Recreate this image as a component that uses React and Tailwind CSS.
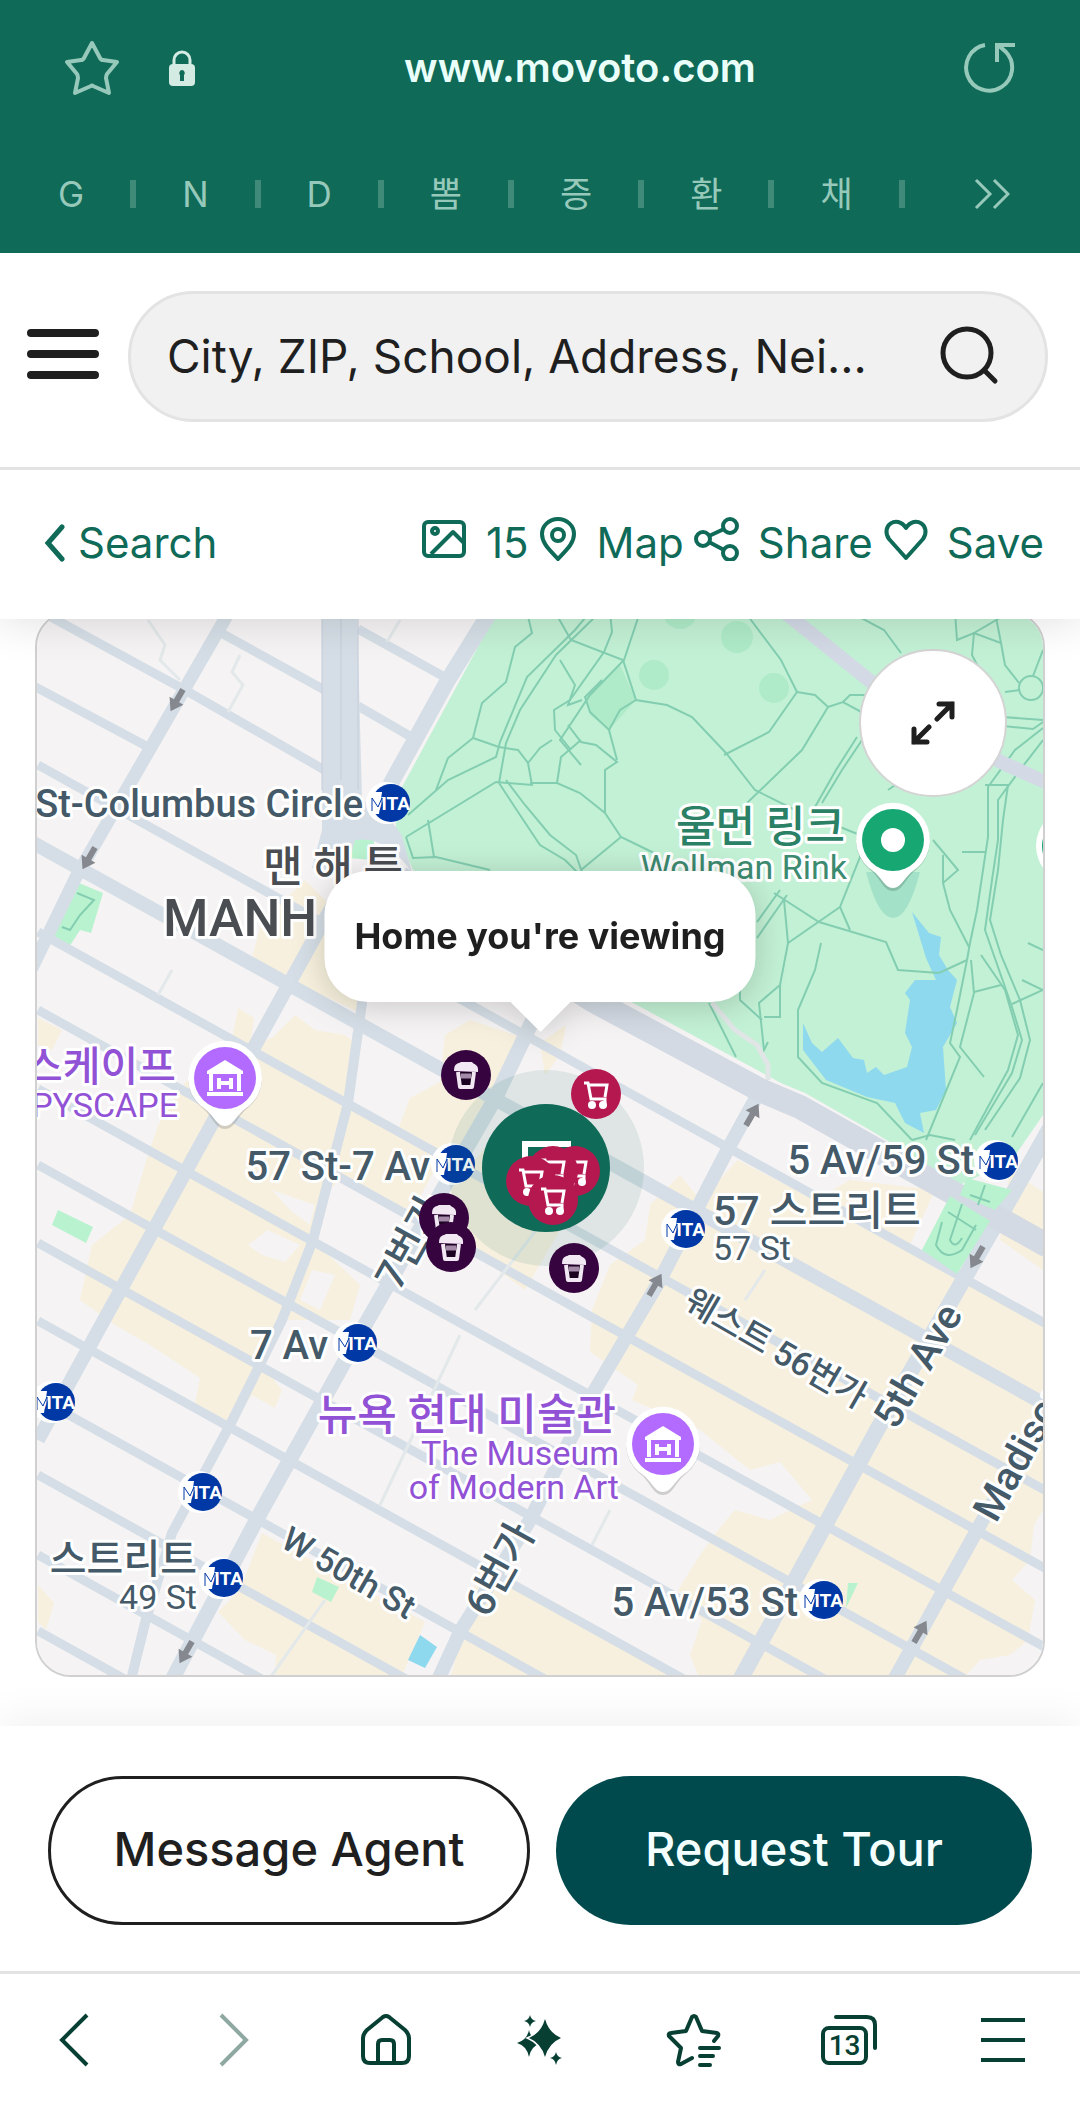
import React from 'react';

const bookmarks = ['G', 'N', 'D', '뽐', '증', '환', '채'];

// y of every cross street at x = 38, they all run down-right with the same slope
const streets = [765, 932, 1010, 1089, 1165, 1243, 1321, 1398, 1475, 1555, 1631];

const avenues = [
  { d: 'M229 612 L76 877 L30 972', w: 13 },
  { d: 'M340 893 L317 933 L38 1440', w: 14 },
  { d: 'M365 960 L362 1003 L348 1103 L313 1240 L282 1320 L231 1423 L172 1533 L145 1623 L131 1680', w: 10 },
  { d: 'M540 1005 L496 1097 L444 1187 L365 1325 L258 1517 L172 1680', w: 15 },
  { d: 'M763 1085 L729 1147 L660 1280 L595 1390 L530 1520 L461 1630 L438 1680', w: 14 },
  { d: 'M1050 1128 L998 1220 L946 1310 L877 1430 L795 1580 L740 1680', w: 16 },
  { d: 'M1050 1405 L981 1523 L894 1680', w: 14 },
  { d: 'M490 612 L448 680 L390 785', w: 16 },
];

const parkPaths = [
  'M527 612 L532 633 L515 647 L506 682 L482 703 L473 738 L448 758 L436 790',
  'M473 738 L499 747 L518 750 L528 763 L532 785 L496 782 L406 837',
  'M528 763 L540 748 L552 740',
  'M408 815 L448 780 L496 757 L500 742 L527 677 L575 630 L590 612',
  'M499 783 L506 743 L520 710 L556 655 L600 612',
  'M499 783 L520 815 L540 845 L565 860 L590 885',
  'M506 780 L525 805 L550 835 L576 855 L582 872',
  'M406 837 L413 858 L436 857 L490 870',
  'M428 820 L434 857',
  'M555 612 L571 640 L623 660 L636 700 L667 705 L692 717 L726 753 L755 790 L795 810',
  'M640 612 L624 660 L590 695 L560 740 L581 765',
  'M610 612 L612 632 L604 652 L570 700 L554 710 L555 730 L571 750',
  'M560 660 L575 685 L568 705 L582 700',
  'M568 725 L581 742 L596 745 L617 762 L605 770 L605 813',
  'M609 730 L617 760',
  'M636 700 L620 710 L609 730 L590 712 L585 697 L602 680',
  'M745 612 L781 660 L797 692 L769 732 L724 755',
  'M797 692 L815 695 L828 707 L802 750 L747 803',
  'M828 707 L843 702 L865 714',
  'M843 702 L850 695 L868 695',
  'M857 737 L836 770 L815 807',
  'M862 740 L842 770 L822 803',
  'M850 612 L884 630 L901 653',
  'M530 783 L557 783 L580 793 L605 813 L621 837 L654 853',
  'M621 837 L581 870',
  'M557 783 L561 757 L581 740',
  'M955 612 L957 640 L974 633 L1001 643 L1005 665 L1019 683',
  'M1010 612 L974 633 L972 655 L985 680',
  'M1043 650 L1033 676',
  'M995 612 L1001 643',
  'M1005 692 L1019 690',
  'M1003 717 L1043 720',
  'M1003 726 L1033 729 L1043 722',
  'M1043 728 L1015 750 L988 787 L988 837 L977 910 L970 943 L967 960',
  'M1043 740 L1020 770 L998 800 L998 840 L992 880 L985 930 L1012 1007 L1022 1040 L1012 1073 L975 1135',
  'M985 785 L1008 785 L1003 820 L998 870 L990 920 L1001 955 L1020 1000 L1030 1040 L1020 1078 L985 1130',
  'M933 840 L958 870 L943 883 L950 910 L969 947',
  'M943 855 L943 883',
  'M962 852 L986 852',
  'M888 790 L898 783 L905 775',
  'M774 893 L819 922 L886 942 L898 970 L939 973 L967 960',
  'M835 825 L860 835 L860 857 L840 907 L850 930',
  'M840 907 L788 943 L784 900',
  'M821 943 L815 970 L798 1010 L798 1057 L822 1083 L877 1103 L912 1140',
  'M788 943 L780 985 L759 1003 L764 1050 L768 1042',
  'M780 985 L780 1017 L764 1017',
  'M709 1003 L736 1057',
  'M740 990 L740 1000 L762 1020',
  'M780 890 L757 922',
  'M787 895 L757 938',
  'M967 960 L957 1010 L950 1043 L960 1057 L926 1140',
  'M971 960 L974 993 L960 1047 L984 1077',
  'M981 955 L1005 990 L1018 1035 L1008 1070 L970 1140',
  'M974 992 L1001 985',
  'M1022 980 L1043 990 L1012 1004',
  'M1043 1083 L1012 1137',
  'M1028 943 L1043 950',
  'M912 1140 L930 1135 L955 1140',
];

const subways = [
  [391, 803],
  [456, 1164],
  [999, 1161],
  [686, 1229],
  [358, 1343],
  [56, 1402],
  [203, 1492],
  [224, 1578],
  [824, 1600],
];

const labels = [
  { text: 'St-Columbus Circle', x: 363, y: 817, size: 38, anchor: 'end' },
  { text: '57 St-7 Av', x: 430, y: 1180, size: 40, anchor: 'end' },
  { text: '5 Av/59 St', x: 974, y: 1174, size: 40, anchor: 'end' },
  { text: '7 Av', x: 328, y: 1359, size: 40, anchor: 'end' },
  { text: '5 Av/53 St', x: 798, y: 1616, size: 40, anchor: 'end' },
  { text: '57 스트리트', x: 713, y: 1225, size: 41 },
  { text: '57 St', x: 713, y: 1260, size: 34, light: true },
  { text: '스트리트', x: 197, y: 1573, size: 40, anchor: 'end' },
  { text: '49 St', x: 197, y: 1609, size: 34, light: true, anchor: 'end' },
  { text: '울먼 링크', x: 845, y: 842, size: 43, color: '#2b8165', anchor: 'end' },
  { text: 'Wollman Rink', x: 847, y: 879, size: 34, color: '#3c8a70', light: true, anchor: 'end' },
  { text: '스케이프', x: 176, y: 1081, size: 41, color: '#9152d6', anchor: 'end' },
  { text: 'PYSCAPE', x: 178, y: 1117, size: 34, color: '#9152d6', light: true, anchor: 'end' },
  { text: '뉴욕 현대 미술관', x: 616, y: 1430, size: 43, color: '#9152d6', anchor: 'end' },
  { text: 'The Museum', x: 619, y: 1465, size: 34, color: '#9152d6', light: true, anchor: 'end' },
  { text: 'of Modern Art', x: 619, y: 1499, size: 34, color: '#9152d6', light: true, anchor: 'end' },
  { text: '맨 해 튼', x: 263, y: 882, size: 43, color: '#4a4d52' },
  { text: 'MANH', x: 163, y: 936, size: 52, color: '#4a4d52' },
  { text: '7번가', x: 399, y: 1292, size: 41, rotate: -61 },
  { text: '6번가', x: 488, y: 1619, size: 41, rotate: -61 },
  { text: '5th Ave', x: 896, y: 1431, size: 40, rotate: -60 },
  { text: 'Madison Ave', x: 996, y: 1524, size: 40, rotate: -61 },
  { text: 'W 50th St', x: 279, y: 1546, size: 34, rotate: 30 },
  { text: '웨스트 56번가', x: 682, y: 1308, size: 34, rotate: 30 },
];

const arrows = [
  [177, 700, 210],
  [89, 858, 210],
  [977, 1257, 210],
  [186, 1652, 210],
  [752, 1115, 30],
  [655, 1285, 30],
  [920, 1632, 30],
];

function Subway({ x, y }) {
  return (
    <g>
      <circle cx={x - 4} cy={y} r="21" fill="#fff" />
      <circle cx={x} cy={y} r="19" fill="#0039a6" />
      <path d={`M${x - 21} ${y - 11} l12 0 l-3 22 l-9 0 z`} fill="#fff" />
      <text x={x - 1} y={y + 7} textAnchor="middle" fontSize="19" fontWeight="700" fill="#fff">
        MTA
      </text>
      <path d={`M${x - 19} ${y + 8} v-13 l6 9 l4 -9 v13`} fill="none" stroke="#0039a6" strokeWidth="1" />
    </g>
  );
}

function MuseumPin({ x, y }) {
  return (
    <g transform={`translate(${x} ${y})`}>
      <path d="M0 51 C-10 51 -12 38 -24 29 A37 37 0 1 1 24 29 C12 38 10 51 0 51 Z" fill="#8a8a8a" opacity="0.35" />
      <path d="M0 48 C-9 48 -11 36 -24 28 A37 37 0 1 1 24 28 C11 36 9 48 0 48 Z" fill="#fff" />
      <circle r="31" fill="#b36bff" />
      <path d="M0 -18 L18 -7 V-4 H-18 V-7 Z" fill="#fff" />
      <path d="M-14 -4 V13 M14 -4 V13 M-18 16 H18 M-6 0 V11 M6 0 V11 M-6 5 H6" stroke="#fff" strokeWidth="4" fill="none" />
    </g>
  );
}

function Coffee({ x, y }) {
  return (
    <g transform={`translate(${x} ${y})`}>
      <circle r="25" fill="#36053f" />
      <path d="M-8 -3 L-6 12 H6 L8 -3" fill="#1d0322" stroke="#f1e8f3" strokeWidth="4" strokeLinejoin="round" />
      <path d="M-12 -4 C-12 -13 -7 -11 -5 -13 H6 C8 -10 13 -11 12 -3 Z" fill="#f1e8f3" />
      <path d="M-5 1 H5" stroke="#a58aaa" strokeWidth="5" />
    </g>
  );
}

function Cart({ x, y }) {
  return (
    <g transform={`translate(${x} ${y})`}>
      <circle r="25" fill="#b5174f" />
      <path d="M-12 -11 H-8 L-5 5 H9 V9 M-8 -9 H11 L9 3" fill="none" stroke="#fff" strokeWidth="3" />
      <circle cx="-4" cy="11" r="4" fill="#fff" />
      <circle cx="7" cy="11" r="4" fill="#fff" />
    </g>
  );
}

function CityMap() {
  return (
    <svg
      viewBox="37 613 1006 1062"
      className="block h-auto w-full font-[Roboto,'Noto_Sans_CJK_KR',sans-serif]"
      role="img"
      aria-label="Map"
    >
      <rect x="37" y="613" width="1006" height="1062" fill="#f5f3f4" />

      {/* Commercial blocks */}
      <g fill="#f7f0de">
        <path d="M252 958 L262 920 L290 895 L305 880 L325 900 L365 960 V1015 L300 985 Z" />
        <path d="M232 1040 L238 1008 L254 1018 L250 1045 L272 1038 L295 1015 L315 1030 L345 1035 L358 1045 L348 1105 L440 1160 L410 1215 L340 1180 L318 1200 L313 1240 L360 1285 L350 1320 L285 1320 L262 1365 L282 1390 L275 1408 L252 1395 L231 1423 L195 1403 L200 1378 L150 1345 L115 1325 L80 1300 L92 1245 L130 1215 L145 1165 L158 1125 L200 1060 Z" />
        <path d="M38 1018 L62 1030 L52 1050 L38 1045 Z" />
        <path d="M445 1035 L470 1020 L530 1040 L495 1110 L455 1165 L398 1130 L410 1098 L440 1082 Z" />
        <path d="M450 1190 L500 1130 L560 1230 L525 1290 L470 1250 Z" />
        <path d="M738 1160 L815 1200 L850 1180 L935 1190 L910 1245 L1043 1320 V1510 L1034 1525 L1030 1560 L1012 1580 L1035 1600 L1028 1640 L1010 1655 L980 1660 L962 1680 H700 L690 1655 L702 1620 L678 1590 L700 1555 L722 1525 L735 1510 L770 1520 L812 1500 L780 1462 L750 1470 L700 1430 L632 1400 L638 1385 L590 1352 L592 1310 L610 1265 L645 1240 L650 1205 L680 1175 L700 1200 Z" />
        <path d="M1010 1170 L1043 1192 V1270 L1000 1240 Z" />
        <path d="M262 1533 L425 1622 L400 1680 H275 L276 1655 L245 1640 L218 1612 L240 1590 Z" />
        <path d="M480 1565 L560 1605 L690 1680 H450 Z" />
        <path d="M38 1585 L54 1603 L46 1630 L38 1622 Z" />
        <path d="M540 1043 L566 1025 L560 1055 L545 1075 Z" />
      </g>
      <g fill="#f5f3f4">
        <path d="M268 1230 L300 1245 L285 1262 L262 1255 L248 1245 Z" />
        <path d="M312 1270 L335 1275 L320 1310 L300 1300 Z" />
        <path d="M272 1190 L315 1205 L310 1225 L290 1210 Z" />
      </g>

      {/* Park, lake and small greens */}
      <path
        d="M498 610 L395 800 L396 830 L413 870 L600 985 L781 1083 L805 1093 L870 1130 L960 1185 L1012 1160 L1043 1115 V610 Z"
        fill="#c3f1d5"
      />
      <g fill="#afebc8">
        <path d="M585 697 L620 665 L636 700 L609 730 L590 715 Z" />
        <circle cx="680" cy="612" r="17" />
        <circle cx="737" cy="637" r="16" />
        <circle cx="654" cy="675" r="15" />
        <circle cx="774" cy="688" r="15" />
      </g>
      <g fill="#b9f2cf">
        <path d="M79 883 L103 893 L91 933 L80 930 L69 947 L53 937 Z" />
        <path d="M58 1210 L93 1227 L86 1243 L52 1225 Z" />
        <path d="M317 1577 L339 1587 L331 1602 L312 1592 Z" />
        <path d="M848 1583 L858 1583 L846 1608 Z" />
        <path d="M355 838 L375 838 L370 860 L350 858 Z" />
      </g>
      <path
        d="M912 912 L929 933 L941 937 L939 955 L948 970 L957 980 L950 1007 L957 1023 L943 1047 L946 1090 L936 1110 L920 1113 L924 1133 L905 1123 L895 1103 L867 1097 L826 1080 L803 1050 L803 1023 L812 1043 L822 1052 L838 1038 L853 1058 L864 1060 L867 1073 L876 1067 L884 1075 L907 1067 L912 1047 L905 1033 L910 1000 L905 993 L915 980 L936 980 L926 958 Z"
        fill="#8fd9ee"
      />
      <path d="M420 1635 L437 1647 L425 1668 L408 1660 Z" fill="#8fd9ee" />
      <g fill="none" stroke="#83ceb1" strokeWidth="2">
        {parkPaths.map((d) => (
          <path key={d} d={d} />
        ))}
        <circle cx="1031" cy="688" r="12" />
        <path d="M77 893 L94 900 L80 915 L70 930 L62 927" />
      </g>
      <path d="M782 610 L875 685 L1001 762 L1045 782" fill="none" stroke="#d3d9e5" strokeWidth="14" />
      <path d="M712 1003 L735 1030 L757 1045 L768 1065 V1080" fill="none" stroke="#e0e6e6" strokeWidth="5" />

      {/* Streets and avenues */}
      <g fill="none" stroke="#d5dee6">
        <path d="M40 611 L185 690 L335 776 M214 629 L330 693 M358 629 L450 680 M358 706 L420 742" strokeWidth="9" />
        <path d="M30 684 L150 748" strokeWidth="9" />
        {streets.map((y) => (
          <path key={y} d={`M38 ${y} L1048 ${y + 560}`} strokeWidth="9" />
        ))}
        <path d="M30 841 L1048 1406" strokeWidth="14" />
        {avenues.map((a) => (
          <path key={a.d} d={a.d} strokeWidth={a.w} strokeLinejoin="round" />
        ))}
      </g>
      <path d="M322 610 H357 L362 800 Q390 815 402 836 L412 872 Q385 835 355 840 L345 875 L312 868 L322 830 Z" fill="#d5dee6" />
      <path d="M341 612 V780" stroke="#c3ccda" strokeWidth="1" />
      <path d="M322 612 V790 M358 612 V790" stroke="#c3ccda" strokeWidth="1" />
      <path d="M400 878 L592 1000 L760 1090 L800 1107 L1048 1246" fill="none" stroke="#d3dae3" strokeWidth="24" />
      <g fill="none" stroke="#e3e8ea" strokeWidth="3">
        <path d="M148 620 L165 645 L160 660 L180 680 M240 655 L232 672 L243 685 L228 712" />
        <path d="M172 970 L158 995 M540 1225 L475 1310 M460 1335 L380 1505 M325 1600 L270 1678 M610 1510 L592 1545" />
        <path d="M765 1270 L745 1300 M400 620 L387 642" />
      </g>
      <path d="M950 1196 L990 1221 L957 1274 L922 1250 Z M967 1178 L1012 1190 L995 1210 L960 1195 Z" fill="#b9f2cf" />
      <path
        d="M948 1212 L976 1230 M942 1222 L936 1245 Q945 1262 962 1250 L976 1225 M962 1204 L950 1240 Q955 1250 962 1238 M970 1195 L990 1202 M985 1185 L978 1205"
        fill="none"
        stroke="#83ceb1"
        strokeWidth="2"
      />

      {arrows.map(([x, y, r]) => (
        <path
          key={`${x}-${y}`}
          d="M0 -13 L8 -1 H3 V12 H-3 V-1 H-8 Z"
          fill="#85888e"
          transform={`translate(${x} ${y}) rotate(${r})`}
        />
      ))}

      {/* Labels */}
      {labels.map((l) => (
        <text
          key={l.text}
          transform={`translate(${l.x} ${l.y}) rotate(${l.rotate || 0})`}
          fontSize={l.size}
          fontWeight={l.light ? 400 : 500}
          textAnchor={l.anchor || 'start'}
          fill={l.color || '#455a68'}
          stroke="#fff"
          strokeWidth="6"
          strokeLinejoin="round"
          paintOrder="stroke"
        >
          {l.text}
        </text>
      ))}

      {subways.map(([x, y]) => (
        <Subway key={`${x}-${y}`} x={x} y={y} />
      ))}

      <MuseumPin x={225} y={1078} />
      <MuseumPin x={663} y={1444} />
      <path d="M866 872 Q878 918 893 918 Q908 918 920 872 Z" fill="#a3e2c8" />
      <g transform="translate(893 840)">
        <path d="M0 51 C-10 51 -12 38 -24 29 A37 37 0 1 1 24 29 C12 38 10 51 0 51 Z" fill="#5c8a78" opacity="0.4" />
        <path d="M0 48 C-9 48 -11 36 -24 28 A37 37 0 1 1 24 28 C11 36 9 48 0 48 Z" fill="#fff" />
        <circle r="31" fill="#17a773" />
        <circle r="12" fill="#fff" />
      </g>
      <circle cx="1073" cy="846" r="37" fill="#fff" />
      <circle cx="1073" cy="846" r="31" fill="#17a773" />

      {/* Listing and places around it */}
      <circle cx="546" cy="1168" r="98" fill="#0f6a58" opacity="0.1" />
      <circle cx="546" cy="1168" r="64" fill="#0f6a58" />
      <path d="M525 1165 V1144 H571" fill="none" stroke="#fff" strokeWidth="6" />
      <Coffee x={466} y={1075} />
      <Coffee x={444} y={1218} />
      <Coffee x={451} y={1247} />
      <Coffee x={574} y={1268} />
      <Cart x={596} y={1094} />
      <Cart x={575} y={1171} />
      <Cart x={553} y={1171} />
      <Cart x={531} y={1181} />
      <Cart x={553} y={1200} />
    </svg>
  );
}

function BrowserBar() {
  return (
    <div className="bg-[#0f6a58] text-[#97c9bb]">
      <div className="flex items-center px-16 pt-10">
        <button aria-label="Bookmark">
          <svg viewBox="0 0 56 56" className="size-14" fill="none" stroke="currentColor" strokeWidth="4" strokeLinejoin="round">
            <path d="M28 3 L36 18 Q37 20 39 20 L53 22 L43 34 Q42 36 42 38 L45 53 L29 46 Q28 45 27 46 L11 53 L14 38 Q14 36 13 34 L3 22 L17 20 Q19 20 20 18 Z" />
          </svg>
        </button>
        <svg viewBox="0 0 28 36" className="ml-12 h-9 w-7 text-[#d3ebe3]">
          <path d="M6 16 V10 a8 8 0 0 1 16 0 V16" fill="none" stroke="currentColor" strokeWidth="3" />
          <rect x="1" y="14" width="26" height="22" rx="4" fill="currentColor" />
          <path d="M14 20 a3 3 0 0 1 2 5 V31 H12 V25 a3 3 0 0 1 2 -5" fill="#0f6a58" />
        </svg>
        <span className="flex-1 text-center text-[40px] leading-[56px] font-semibold text-[#eafffa]">www.movoto.com</span>
        <button aria-label="Reload">
          <svg viewBox="0 0 52 56" className="h-14 w-[52px]" fill="none" stroke="currentColor" strokeWidth="4">
            <path d="M21 5 A23 23 0 1 0 42 12 L34 5 M33 22 V5 H51" />
          </svg>
        </button>
      </div>
      <div className="mt-[60px] flex h-[97px] items-start gap-[46px] pr-[70px] pl-[58px] text-[35px]">
        {bookmarks.map((name) => (
          <React.Fragment key={name}>
            <a href="#" className="leading-[76px]">
              {name}
            </a>
            <span className="mt-6 h-7 w-1.5 bg-[#3f8a78]" />
          </React.Fragment>
        ))}
        <button className="mt-5 ml-auto" aria-label="More bookmarks">
          <svg viewBox="0 0 36 36" className="size-9" fill="none" stroke="currentColor" strokeWidth="3">
            <path d="M2 4 L16 18 L2 32 M20 4 L34 18 L20 32" />
          </svg>
        </button>
      </div>
    </div>
  );
}

function SiteHeader() {
  return (
    <header className="relative z-20 flex items-center border-b-3 border-[#e3e3e3] bg-white pt-[38px] pr-8 pb-[45px] pl-[26px]">
      <button aria-label="Menu" className="mr-7 mb-1.5">
        <svg viewBox="0 0 74 50" className="h-[50px] w-[74px]" stroke="#1f1f1f" strokeWidth="8" strokeLinecap="round">
          <path d="M5 4 H69 M5 25 H69 M5 46 H69" />
        </svg>
      </button>
      <form className="flex h-[131px] flex-1 items-center rounded-full border-3 border-[#e3e3e3] bg-[#f1f1f1] pr-[46px] pl-9">
        <input
          type="text"
          aria-label="Search homes"
          placeholder="City, ZIP, School, Address, Nei..."
          className="min-w-0 flex-1 bg-transparent text-[46px] text-[#1f1f1f] outline-none placeholder:text-[#1f1f1f]"
        />
        <button type="button" aria-label="Search" className="mb-1">
          <svg viewBox="0 0 60 60" className="size-[60px]" fill="none" stroke="#1f1f1f" strokeWidth="5" strokeLinecap="round">
            <circle cx="28" cy="28" r="24" />
            <path d="M45 45 L56 56" />
          </svg>
        </button>
      </form>
    </header>
  );
}

function ListingToolbar() {
  return (
    <nav className="relative z-10 flex h-[149px] items-center justify-between bg-white pr-9 pb-1 pl-11 text-[42px] text-[#0f6a58] shadow-[0_4px_40px_rgba(0,0,0,0.12)]">
      <a href="#" className="flex items-center gap-3">
        <svg viewBox="0 0 22 38" className="h-[38px] w-[22px]" fill="none" stroke="currentColor" strokeWidth="5" strokeLinecap="round">
          <path d="M18 3 L4 19 L18 35" />
        </svg>
        Search
      </a>
      <div className="flex items-center gap-2.5">
        <button className="flex items-center gap-5">
          <svg viewBox="0 0 44 44" className="-mt-2 size-11" fill="none" stroke="currentColor" strokeWidth="4" strokeLinejoin="round">
            <rect x="2" y="5" width="40" height="34" rx="4" />
            <circle cx="13" cy="14" r="3" />
            <path d="M9 37 L31 15 L42 26" />
          </svg>
          15
        </button>
        <button className="flex items-center gap-5">
          <svg viewBox="0 0 38 44" className="-mt-2 h-11 w-[38px]" fill="none" stroke="currentColor" strokeWidth="4">
            <path d="M19 42 C12 34 3 27 3 17 a16 15 0 0 1 32 0 C35 27 26 34 19 42 Z" />
            <circle cx="19" cy="18" r="6" />
          </svg>
          Map
        </button>
        <button className="flex items-center gap-[18px]">
          <svg viewBox="0 0 46 44" className="-mt-2 h-11 w-[46px]" fill="none" stroke="currentColor" strokeWidth="4">
            <circle cx="9" cy="22" r="7" />
            <circle cx="36" cy="9" r="7" />
            <circle cx="36" cy="36" r="7" />
            <path d="M15 19 L30 12 M15 25 L30 33" />
          </svg>
          Share
        </button>
        <button className="flex items-center gap-[18px]">
          <svg viewBox="0 0 46 44" className="-mt-2 h-11 w-[46px]" fill="none" stroke="currentColor" strokeWidth="4" strokeLinejoin="round">
            <path d="M23 41 L6 22 C-3 9 14 -3 23 11 C32 -3 49 9 40 22 Z" />
          </svg>
          Save
        </button>
      </div>
    </nav>
  );
}

function BottomNav() {
  return (
    <nav className="relative grid h-[135px] grid-cols-7 items-center justify-items-center border-t-3 border-[#e3e3e3] bg-white text-[#083f33]">
      <button aria-label="Back">
        <svg viewBox="0 0 56 56" className="size-14" fill="none" stroke="currentColor" strokeWidth="4">
          <path d="M38 3 L13 28 L38 53" />
        </svg>
      </button>
      <button aria-label="Forward" className="text-[#8fa8a1]">
        <svg viewBox="0 0 56 56" className="size-14" fill="none" stroke="currentColor" strokeWidth="4">
          <path d="M18 3 L43 28 L18 53" />
        </svg>
      </button>
      <button aria-label="Home">
        <svg viewBox="0 0 56 56" className="size-14" fill="none" stroke="currentColor" strokeWidth="4" strokeLinejoin="round">
          <path d="M25 5 Q28 3 31 5 L47 18 Q51 22 51 26 V44 Q51 51 44 51 H12 Q5 51 5 44 V26 Q5 22 9 18 Z" />
          <path d="M20 51 V32 Q20 28 24 28 H32 Q36 28 36 32 V51" />
        </svg>
      </button>
      <button aria-label="Assistant">
        <svg viewBox="0 0 56 56" className="size-14" fill="currentColor">
          <path d="M17 18 Q19 28 29 31 Q19 34 17 45 Q15 34 5 31 Q15 28 17 18 Z" />
          <path
            d="M33 7 Q37 21 49 26 Q37 31 33 45 Q29 31 17 26 Q29 21 33 7 Z"
            stroke="#fff"
            strokeWidth="3"
            paintOrder="stroke"
          />
          <path d="M18 3 Q19 8 24 9 Q19 10 18 15 Q17 10 12 9 Q17 8 18 3 Z" />
          <path d="M44 40 Q45 45 50 46 Q45 47 44 53 Q43 47 38 46 Q43 45 44 40 Z" />
        </svg>
      </button>
      <button aria-label="Bookmarks">
        <svg viewBox="0 0 56 56" className="size-14" fill="none" stroke="currentColor" strokeWidth="4" strokeLinejoin="round" strokeLinecap="round">
          <path d="M26 46 L15 52 Q12 53 12 50 L15 36 L3 24 Q2 21 5 21 L20 19 L26 5 Q28 3 30 5 L36 19 L51 21 Q53 22 52 24 L48 29" />
          <path d="M34 36 H53 M34 44 H47 M34 53 H44" />
        </svg>
      </button>
      <button aria-label="Tabs" className="relative">
        <svg viewBox="0 0 56 56" className="size-14" fill="none" stroke="currentColor" strokeWidth="4" strokeLinecap="round">
          <rect x="2" y="16" width="43" height="35" rx="6" />
          <path d="M15 5 H46 Q54 5 54 13 V36" />
        </svg>
        <span className="absolute top-5 left-0 w-12 text-center font-[Roboto] text-[28px] leading-7 font-medium">13</span>
      </button>
      <button aria-label="Browser menu">
        <svg viewBox="0 0 56 56" className="size-14" stroke="currentColor" strokeWidth="4">
          <path d="M6 8 H50 M6 28 H50 M6 48 H50" />
        </svg>
      </button>
    </nav>
  );
}

const App = () => {
  return (
    <div className="flex min-h-screen flex-col bg-white font-[Inter,'Noto_Sans_CJK_KR',sans-serif] text-[#1f1f1f]">
      <BrowserBar />
      <SiteHeader />
      <ListingToolbar />

      <main className="relative mx-[35px] -mt-2 mb-12">
        <div className="overflow-hidden rounded-[36px] border-2 border-[#d0d0d0]">
          <CityMap />
        </div>
        <div className="absolute top-[260px] left-1/2 flex -translate-x-1/2 flex-col items-center drop-shadow-[0_4px_16px_rgba(0,0,0,0.18)]">
          <p className="rounded-[44px] bg-white px-[30px] py-10 text-4xl leading-[51px] font-bold whitespace-nowrap">
            Home you're viewing
          </p>
          <svg viewBox="0 0 60 30" className="h-[30px] w-[60px]" fill="#fff">
            <path d="M0 0 H60 L30 30 Z" />
          </svg>
        </div>
        <button
          aria-label="Expand map"
          className="absolute top-[38px] right-[38px] flex size-[148px] items-center justify-center rounded-full border-2 border-[#d4d4d4] bg-white"
        >
          <svg viewBox="0 0 44 44" className="size-11" fill="none" stroke="#1f1f1f" strokeWidth="5" strokeLinecap="round">
            <path d="M26 18 L41 3 M28 3 H41 V16 M18 26 L3 41 M3 28 V41 H16" />
          </svg>
        </button>
      </main>

      <div className="mt-auto">
        <section className="flex gap-[26px] px-12 pt-[50px] pb-[46px] shadow-[0_-8px_40px_rgba(0,0,0,0.06)]">
          <button className="h-[149px] flex-1 rounded-full border-3 border-[#1f1f1f] pb-0.5 text-[47px] font-medium">
            Message Agent
          </button>
          <button className="h-[149px] flex-1 rounded-full bg-[#00494d] pb-0.5 text-[47px] font-medium text-[#f4ffff]">
            Request Tour
          </button>
        </section>
        <BottomNav />
      </div>
    </div>
  );
};

export default App;
